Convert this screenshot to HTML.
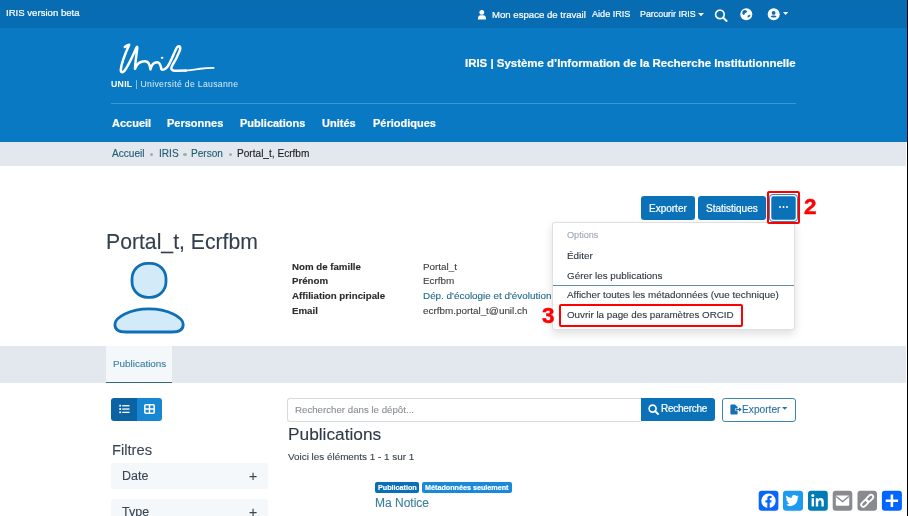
<!DOCTYPE html>
<html><head><meta charset="utf-8">
<style>
html,body{margin:0;padding:0;}
body{width:908px;height:516px;overflow:hidden;position:relative;background:#fff;font-family:"Liberation Sans",sans-serif;color:#333;}
.a{position:absolute;white-space:nowrap;line-height:1;-webkit-text-stroke:0.12px currentColor;-webkit-font-smoothing:antialiased;will-change:transform;}
.b{position:absolute;}
.w{color:#fff;-webkit-text-stroke:0.2px #fff;}
</style></head><body>
<!-- top bar -->
<div class="b" style="left:0;top:0;width:908px;height:28px;background:#086cb3"></div>
<div class="a w" style="left:6px;top:8px;font-size:9.6px">IRIS version beta</div>
<!-- header -->
<div class="b" style="left:0;top:28px;width:908px;height:114px;background:#0979c3"></div>
<!-- topbar right -->
<svg class="b" style="left:477px;top:9.5px" width="10" height="10" viewBox="0 0 10 10"><circle cx="4.8" cy="2.4" r="2.45" fill="#fff"/><path d="M0.9 9.5 Q0.9 5.3 3.6 5.3 L6 5.3 Q9.1 5.3 9.1 9.5 Z" fill="#fff"/></svg>
<div class="a w" style="left:491.5px;top:9.5px;font-size:9.6px">Mon espace de travail</div>
<div class="a w" style="left:592px;top:9.5px;font-size:9.1px">Aide IRIS</div>
<div class="a w" style="left:640px;top:9.5px;font-size:8.9px">Parcourir IRIS</div>
<svg class="b" style="left:698px;top:13px" width="6" height="4" viewBox="0 0 6 4"><path d="M0 0 L6 0 L3 3.2 Z" fill="#fff"/></svg>
<svg class="b" style="left:714px;top:8.5px" width="14" height="13" viewBox="0 0 14 13"><circle cx="5.9" cy="5.4" r="4.3" fill="none" stroke="#fff" stroke-width="1.7"/><path d="M9 8.6 L12.6 11.9" stroke="#fff" stroke-width="2" stroke-linecap="round"/></svg>
<svg class="b" style="left:740px;top:7.5px" width="13" height="13" viewBox="0 0 13 13"><circle cx="6.3" cy="6.3" r="6" fill="#fff"/><path d="M2.4 3.6 L4 2.1 L6 2.3 L7.3 3.5 L6.5 4.6 L5 5 L4.6 6.5 L3.2 7.1 L2.4 5.8 Z" fill="#086cb3"/><ellipse cx="8.9" cy="8.1" rx="1.6" ry="0.9" transform="rotate(-35 8.9 8.1)" fill="#086cb3"/></svg>
<svg class="b" style="left:766.5px;top:7.5px" width="13" height="13" viewBox="0 0 13 13"><circle cx="6.7" cy="6.3" r="6" fill="#fff"/><circle cx="6.6" cy="4.9" r="1.9" fill="#086cb3"/><ellipse cx="6.6" cy="8.6" rx="2.8" ry="1" fill="#086cb3"/></svg>
<svg class="b" style="left:782.9px;top:11.8px" width="6" height="4" viewBox="0 0 6 4"><path d="M0 0 L5.3 0 L2.65 3.1 Z" fill="#fff"/></svg>
<!-- logo -->
<svg class="b" style="left:110px;top:38px" width="110" height="40" viewBox="110 38 110 40">
<path d="M124.8 47 Q127 45.2 129.2 44.8 C125.5 53 121.4 63 120.8 69.6 C120.6 73 122.8 72.8 124.6 70.6 C129 65 133 55 136.6 47.4 Q137.3 46.2 137.3 48 C136.6 55 135.2 62 135 68.8 C136.6 64.2 140.4 61.3 144.8 61.3 C148.8 61.3 150 64.4 150.4 69.4 C151.6 64.8 154 62.2 157 62.2 C160 62.2 160.8 65.6 161.4 69.2 C162.6 70.4 165.6 69.2 167.6 66.6 C170.6 62.4 174.4 52 176.6 48 C177.6 46.2 179 45.8 179.8 46.6 C180.6 47.6 180.2 49.6 179.4 51.4 C177.8 55.6 175 61 172.6 64.8 C171.6 66.4 171 67.6 171.4 68.8 C172 70.6 174.6 70.9 177.5 70.8 L186 70.6" fill="none" stroke="#fff" stroke-width="2.5" stroke-linecap="round" stroke-linejoin="round"/><path d="M185 70.65 C191 70.4 195 69.6 200 68.8 C205 68.1 209 67.9 213.6 67.9" fill="none" stroke="#fff" stroke-width="1.9" stroke-linecap="round"/>
<ellipse cx="162.1" cy="57.8" rx="1.4" ry="1.1" fill="#fff"/>
</svg>
<div class="a" style="left:110.8px;top:79.8px;font-size:8.7px;letter-spacing:0.3px;color:#dcebf6;-webkit-text-stroke:0"><b style="color:#fff">UNIL</b> <span style="color:#b9d6ec">|</span> Université de Lausanne</div>
<div class="a w" style="left:465px;top:58.3px;font-size:11.45px;font-weight:bold">IRIS | Système d’Information de la Recherche Institutionnelle</div>
<div class="b" style="left:111px;top:102.5px;width:685px;height:1px;background:rgba(255,255,255,0.22)"></div>
<div class="a w" style="left:111.6px;top:117.7px;font-size:11px;font-weight:bold">Accueil</div>
<div class="a w" style="left:166.7px;top:117.7px;font-size:11px;font-weight:bold">Personnes</div>
<div class="a w" style="left:239.5px;top:117.7px;font-size:11px;font-weight:bold">Publications</div>
<div class="a w" style="left:322.4px;top:117.7px;font-size:11px;font-weight:bold">Unités</div>
<div class="a w" style="left:373px;top:117.7px;font-size:11px;font-weight:bold">Périodiques</div>
<!-- breadcrumb -->
<div class="b" style="left:0;top:142px;width:908px;height:24.4px;background:#e3e8ee"></div>
<div class="a" style="left:111.6px;top:149.3px;font-size:10.1px;color:#1f5a73">Accueil</div>
<div class="b" style="left:149.5px;top:152.6px;width:3.7px;height:3.7px;border-radius:50%;background:#a3adb6"></div>
<div class="a" style="left:158.6px;top:149.3px;font-size:10.1px;color:#1f5a73">IRIS</div>
<div class="b" style="left:183.2px;top:152.6px;width:3.7px;height:3.7px;border-radius:50%;background:#a3adb6"></div>
<div class="a" style="left:191.2px;top:149.3px;font-size:10.1px;color:#1f5a73">Person</div>
<div class="b" style="left:228.5px;top:152.6px;width:3.7px;height:3.7px;border-radius:50%;background:#a3adb6"></div>
<div class="a" style="left:237px;top:149.3px;font-size:10.1px;color:#1a1a1a">Portal_t, Ecrfbm</div>
<!-- buttons -->
<div class="b" style="left:641px;top:196.2px;width:54px;height:23.4px;background:#0b72b9;border-radius:3px"></div>
<div class="a w" style="left:649px;top:203.5px;font-size:10px">Exporter</div>
<div class="b" style="left:697.6px;top:196.2px;width:68.6px;height:23.4px;background:#0b72b9;border-radius:3px"></div>
<div class="a w" style="left:706px;top:203.5px;font-size:10px">Statistiques</div>
<div class="b" style="left:768.5px;top:194.1px;width:29.5px;height:27.7px;background:#0b72b9;border-radius:4.5px;box-shadow:inset 0 0 0 1px #3f86bf,inset 0 0 0 2.3px #fff"></div>
<div class="b" style="left:779.2px;top:206.4px;width:2px;height:2px;background:#fff;border-radius:50%;box-shadow:3.5px 0 0 #fff,7px 0 0 #fff"></div>
<!-- title -->
<div class="a" style="left:106px;top:230.5px;font-size:21.2px;color:#333f4d">Portal_t, Ecrfbm</div>
<!-- avatar -->
<svg class="b" style="left:110px;top:258px" width="80" height="80" viewBox="110 258 80 80">
<rect x="132" y="263.3" width="34" height="34" rx="15.5" ry="15.5" fill="#d3eaf8" stroke="#0e6fb6" stroke-width="2.8"/>
<path d="M149 308.9 C168 308.9 183.2 317.5 183.2 324.4 C183.2 330 178.5 332 172 332 L126 332 C119.5 332 114.9 330 114.9 324.4 C114.9 317.5 130 308.9 149 308.9 Z" fill="#d3eaf8" stroke="#0e6fb6" stroke-width="2.8"/>
</svg>
<!-- info -->
<div class="a" style="left:291.7px;top:261.6px;font-size:9.7px;font-weight:bold;color:#2b2b2b">Nom de famille</div>
<div class="a" style="left:291.7px;top:276.4px;font-size:9.7px;font-weight:bold;color:#2b2b2b">Prénom</div>
<div class="a" style="left:291.7px;top:290.8px;font-size:9.7px;font-weight:bold;color:#2b2b2b">Affiliation principale</div>
<div class="a" style="left:291.7px;top:306px;font-size:9.7px;font-weight:bold;color:#2b2b2b">Email</div>
<div class="a" style="left:422.5px;top:261.6px;font-size:9.9px;color:#404040">Portal_t</div>
<div class="a" style="left:422.5px;top:276.4px;font-size:9.9px;color:#404040">Ecrfbm</div>
<div class="a" style="left:422.5px;top:290.8px;font-size:9.9px;color:#1f6a8c">Dép. d'écologie et d'évolution</div>
<div class="a" style="left:422.5px;top:306px;font-size:9.9px;color:#404040">ecrfbm.portal_t@unil.ch</div>
<!-- dropdown -->
<div class="b" style="left:552px;top:221.8px;width:243.2px;height:108.6px;background:#fff;border:1px solid rgba(0,0,0,0.12);box-sizing:border-box;border-radius:3px;box-shadow:0 4px 10px rgba(0,0,0,0.13)"></div>
<div class="a" style="left:566.8px;top:231.4px;font-size:9.1px;color:#9ea8b2">Options</div>
<div class="a" style="left:566.8px;top:250.7px;font-size:9.9px;color:#2f3842">Éditer</div>
<div class="a" style="left:566.8px;top:270.6px;font-size:9.9px;color:#2f3842">Gérer les publications</div>
<div class="b" style="left:553px;top:284.5px;width:241px;height:1.5px;background:#5f8ea8"></div>
<div class="a" style="left:566.8px;top:290.2px;font-size:9.9px;color:#2f3842">Afficher toutes les métadonnées (vue technique)</div>
<div class="a" style="left:566.8px;top:310.4px;font-size:9.8px;color:#2f3842">Ouvrir la page des paramètres ORCID</div>
<!-- tab bar -->
<div class="b" style="left:0;top:346px;width:908px;height:37px;background:#e3e8ee"></div>
<div class="b" style="left:106px;top:346px;width:66px;height:35.5px;background:#f4f8fa;border-bottom:1.5px solid #356b74"></div>
<div class="a" style="left:112.7px;top:359.3px;font-size:9.9px;color:#3a7fa2">Publications</div>
<!-- view toggle -->
<div class="b" style="left:111px;top:398px;width:26px;height:23.3px;background:#0b63a3;border-radius:3px 0 0 3px"></div>
<div class="b" style="left:137px;top:398px;width:25.2px;height:23.3px;background:#1787d4;border-radius:0 3px 3px 0"></div>
<svg class="b" style="left:119px;top:404px" width="11" height="10" viewBox="0 0 11 10"><g fill="#fff"><rect x="0.3" y="0.8" width="1.8" height="1.8"/><rect x="0.3" y="4.1" width="1.8" height="1.8"/><rect x="0.3" y="7.4" width="1.8" height="1.8"/><rect x="3.2" y="1.1" width="7.3" height="1.3"/><rect x="3.2" y="4.4" width="7.3" height="1.3"/><rect x="3.2" y="7.7" width="7.3" height="1.3"/></g></svg>
<svg class="b" style="left:144px;top:404px" width="11" height="10" viewBox="0 0 11 10"><rect x="0.8" y="0.8" width="9.4" height="8.4" rx="1" fill="none" stroke="#fff" stroke-width="1.5"/><path d="M5.5 1 V9 M1 5 H10" stroke="#fff" stroke-width="1.4"/></svg>
<!-- filters -->
<div class="a" style="left:111.5px;top:443px;font-size:14.7px;color:#3a4654">Filtres</div>
<div class="b" style="left:111px;top:463.2px;width:156.8px;height:25.7px;background:#f5f8fa;border-radius:3px"></div>
<div class="a" style="left:122.2px;top:470.2px;font-size:12.5px;color:#3a4654">Date</div>
<div class="a" style="left:248.6px;top:468.5px;font-size:14px;color:#3a4654">+</div>
<div class="b" style="left:111px;top:499.4px;width:156.8px;height:25.7px;background:#f5f8fa;border-radius:3px"></div>
<div class="a" style="left:122.2px;top:506.4px;font-size:12.5px;color:#3a4654">Type</div>
<div class="a" style="left:248.6px;top:504.7px;font-size:14px;color:#3a4654">+</div>
<!-- search -->
<div class="b" style="left:287.3px;top:398.3px;width:354px;height:23.3px;border:1px solid #d6dbe0;border-right:none;box-sizing:border-box;border-radius:3px 0 0 3px;background:#fff"></div>
<div class="a" style="left:295px;top:404.8px;font-size:9.7px;color:#8a8f96">Rechercher dans le dépôt...</div>
<div class="b" style="left:640.7px;top:398px;width:74px;height:23.2px;background:#0b72b9;border-radius:0 3px 3px 0"></div>
<svg class="b" style="left:647.5px;top:403.5px" width="11" height="11" viewBox="0 0 11 11"><circle cx="4.6" cy="4.6" r="3.5" fill="none" stroke="#fff" stroke-width="1.6"/><path d="M7.1 7.1 L10 10" stroke="#fff" stroke-width="1.8" stroke-linecap="round"/></svg>
<div class="a w" style="left:660.6px;top:404px;font-size:10px;letter-spacing:-0.25px">Recherche</div>
<div class="b" style="left:722.1px;top:398px;width:73.7px;height:23.6px;border:1px solid #3b86b5;box-sizing:border-box;border-radius:3px"></div>
<svg class="b" style="left:730px;top:403.5px" width="12" height="11" viewBox="0 0 12 11"><path d="M0.4 1.2 Q0.4 0.4 1.2 0.4 L5 0.4 L7.6 3 L7.6 4.6 L5 4.6 L5 6.4 L7.6 6.4 L7.6 9.8 Q7.6 10.6 6.8 10.6 L1.2 10.6 Q0.4 10.6 0.4 9.8 Z" fill="#1a6fb0"/><path d="M5.6 5.5 H10.5 M9 4 L10.8 5.5 L9 7" stroke="#1a6fb0" stroke-width="1.2" fill="none"/></svg>
<div class="a" style="left:741.5px;top:404.8px;font-size:10.2px;color:#2a73a8">Exporter</div>
<svg class="b" style="left:782.4px;top:407px" width="6" height="4" viewBox="0 0 6 4"><path d="M0 0 L5.4 0 L2.7 2.8 Z" fill="#2a73a8"/></svg>
<!-- results -->
<div class="a" style="left:287.5px;top:425.6px;font-size:17.3px;color:#2e3a47">Publications</div>
<div class="a" style="left:287.5px;top:451.6px;font-size:9.9px;color:#38424e">Voici les éléments 1 - 1 sur 1</div>
<div class="b" style="left:374.7px;top:482px;width:44.6px;height:10.6px;background:#0b6fb8;border-radius:2px"></div>
<div class="a w" style="left:377.5px;top:484px;font-size:7.2px;font-weight:bold">Publication</div>
<div class="b" style="left:422.3px;top:482px;width:89.5px;height:10.6px;background:#1a8ad8;border-radius:2px"></div>
<div class="a w" style="left:425px;top:484px;font-size:7.2px;font-weight:bold">Métadonnées seulement</div>
<div class="a" style="left:374.7px;top:497px;font-size:12px;color:#3d7fa0">Ma Notice</div>
<!-- social -->
<svg class="b" style="left:758px;top:490px" width="146" height="22" viewBox="758 490 146 22">
<rect x="758.7" y="490.8" width="19.7" height="20" rx="3" fill="#0866ff"/>
<circle cx="768.5" cy="500.8" r="7.2" fill="#fff"/>
<path d="M767.3 508.2 V502.6 H765.4 V500.2 H767.3 V498.6 Q767.3 495.8 770.2 495.8 Q771 495.8 771.6 495.9 V498 H770.6 Q769.7 498 769.7 498.9 V500.2 H771.6 L771.2 502.6 H769.7 V508.2 Z" fill="#0866ff"/>
<rect x="783" y="490.8" width="20" height="20" rx="3" fill="#1d9bf0"/>
<path d="M798.6 496.2 Q797.9 496.6 797 496.7 Q797.9 496.1 798.2 495.2 Q797.4 495.7 796.4 495.9 Q795.6 495 794.3 495 Q791.5 495 791.6 498.1 Q788.4 497.9 786.3 495.5 Q785.2 497.6 787.2 499.2 Q786.6 499.2 786.1 498.9 Q786.1 501 788.3 501.6 Q787.7 501.8 787.1 501.7 Q787.7 503.3 789.4 503.4 Q787.7 504.8 785.4 504.6 Q792.2 508.4 796.3 503 Q797.8 500.8 797.7 497.8 Q798.3 497.2 798.6 496.2 Z" fill="#fff"/>
<rect x="808" y="490.8" width="19.8" height="20" rx="3" fill="#007bb5"/>
<rect x="811.6" y="498.2" width="2.4" height="8.2" fill="#fff"/>
<circle cx="812.8" cy="495.6" r="1.5" fill="#fff"/>
<path d="M815.8 498.2 H818.1 V499.4 Q819 498 820.8 498 Q823.8 498 823.8 501.6 V506.4 H821.4 V502.2 Q821.4 500.2 820 500.2 Q818.2 500.2 818.2 502.4 V506.4 H815.8 Z" fill="#fff"/>
<rect x="832.7" y="490.8" width="19.6" height="20" rx="3" fill="#888a90"/>
<rect x="835.8" y="495.5" width="13.4" height="10.2" rx="1" fill="#fff"/>
<path d="M836.2 496.4 L842.5 501.6 L848.8 496.4" fill="none" stroke="#888a90" stroke-width="1.3"/>
<rect x="857.5" y="490.8" width="19.5" height="20" rx="3" fill="#888a90"/>
<g fill="none" stroke="#fff" stroke-width="1.8" transform="rotate(-45 867.2 500.8)"><rect x="859.6" y="498.6" width="8" height="4.4" rx="2.2"/><rect x="866.8" y="498.6" width="8" height="4.4" rx="2.2"/></g>
<rect x="881.9" y="490.8" width="20" height="20" rx="3" fill="#0166ff"/>
<path d="M891.9 494.6 V507 M885.7 500.8 H898.1" stroke="#fff" stroke-width="2.6"/>
</svg>
<!-- annotations -->
<div class="b" style="left:766.6px;top:191.1px;width:33.5px;height:33.3px;border:2.7px solid #ff0000;box-sizing:border-box;border-radius:2px"></div>
<div class="a" style="left:803.8px;top:196.4px;font-size:22.4px;font-weight:bold;color:#ff0000;-webkit-text-stroke:0.5px #ff0000">2</div>
<div class="b" style="left:558.5px;top:304px;width:184.3px;height:23.3px;border:2.5px solid #ff0000;box-sizing:border-box;border-radius:2px"></div>
<div class="a" style="left:542.2px;top:304.8px;font-size:22.4px;font-weight:bold;color:#ff0000;-webkit-text-stroke:0.5px #ff0000">3</div>
<!-- right border -->
<div class="b" style="left:906px;top:142px;width:1px;height:374px;background:#fff"></div>
<div class="b" style="left:907px;top:0;width:1px;height:516px;background:#000"></div>
</body></html>
